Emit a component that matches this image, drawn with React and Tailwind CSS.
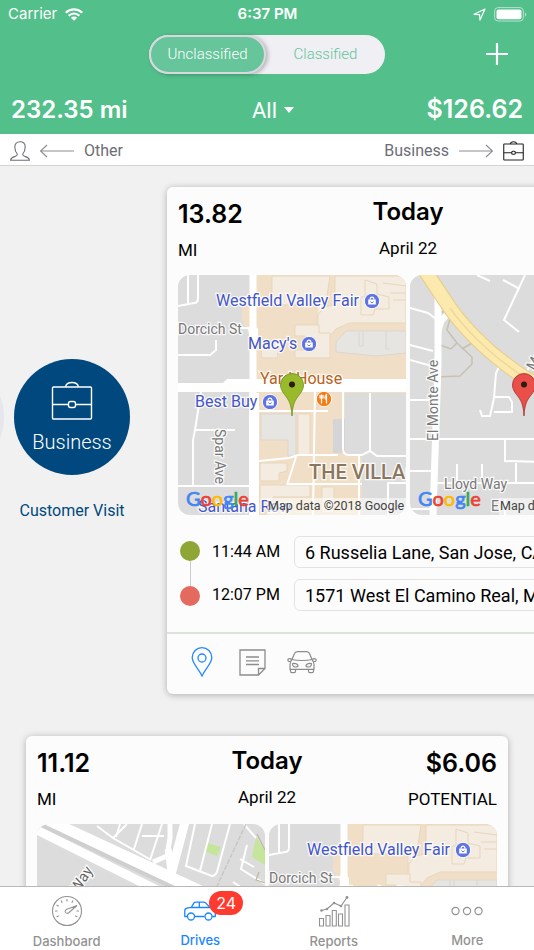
import React from "react";

function Briefcase({ className, strokeWidth = 1.2 }) {
  return (
    <svg viewBox="0 0 42 40" className={className} fill="none" stroke="currentColor" strokeWidth={strokeWidth} strokeLinejoin="round" aria-hidden="true">
      <rect x="1.5" y="6" width="39" height="32" rx="1" />
      <path d="M14.5 6c.5-3 3-4.5 6.5-4.5s6 1.5 6.5 4.5M1.5 23.5h16M24.5 23.5h16" />
      <rect x="17.5" y="20.5" width="7" height="6" rx="2" />
    </svg>
  );
}

function Arrow({ flip }) {
  return (
    <svg viewBox="0 0 34 14" className={flip ? "h-3.5 w-[34px] rotate-180" : "h-3.5 w-[34px]"} fill="none" stroke="#8e8e93" strokeWidth="1.2" aria-hidden="true">
      <path d="M0 7h33M27 1l6.5 6-6.5 6" />
    </svg>
  );
}

function StatusBar() {
  return (
    <div className="grid h-7 grid-cols-3 items-center pr-[7px] pl-2">
      <div className="flex items-center gap-2 text-[15px]">
        Carrier
        <svg viewBox="0 0 18 13" className="h-[13px] w-[18px]" fill="none" stroke="white" strokeWidth="2.2" aria-hidden="true">
          <path d="M.8 4.8a11.6 11.6 0 0 1 16.4 0" />
          <path d="M3.7 7.7a7.5 7.5 0 0 1 10.6 0" />
          <path d="M9 12.8 5.9 9.7a4.4 4.4 0 0 1 6.2 0z" fill="white" stroke="none" />
        </svg>
      </div>
      <div className="text-center text-[15px] font-semibold">6:37 PM</div>
      <div className="flex items-center justify-end gap-2">
        <svg viewBox="0 0 13 13" className="size-[13px]" fill="none" stroke="white" strokeWidth="1.2" strokeLinejoin="round" aria-hidden="true">
          <path d="M12 1 1 6.3l5.5.3.5 5.5z" />
        </svg>
        <svg viewBox="0 0 33 15" className="h-[15px] w-[33px]" aria-hidden="true">
          <rect x=".6" y=".6" width="28.8" height="13.4" rx="3.5" fill="none" stroke="#b5e3cc" strokeWidth="1" />
          <rect x="2.5" y="2.4" width="25" height="9.8" rx="2" fill="white" />
          <path d="M31 5.2c1.7.8 1.7 3.7 0 4.5z" fill="#b5e3cc" />
        </svg>
      </div>
    </div>
  );
}

function Header() {
  return (
    <header className="shrink-0 bg-[#53bf8b] text-white">
      <StatusBar />
      <div className="grid h-[52px] grid-cols-[1fr_auto_1fr] items-center">
        <div className="col-start-2 flex h-[39px] w-[236px] rounded-full bg-[#efeff4] font-[Roboto,sans-serif] text-[15px] font-light">
          <button aria-pressed="true" className="w-[117px] rounded-full border-2 border-[#d9d8de] bg-[#66c59b] shadow-[2px_1px_4px_rgba(0,0,0,0.25)]">Unclassified</button>
          <button aria-pressed="false" className="flex-1 text-[#66c59b]">Classified</button>
        </div>
        <button aria-label="Add drive" className="mr-[15px] flex size-11 items-center justify-center justify-self-end">
          <svg viewBox="0 0 22 22" className="size-[22px]" stroke="white" strokeWidth="2.2" aria-hidden="true">
            <path d="M11 0v22M0 11h22" />
          </svg>
        </button>
      </div>
      <div className="grid h-[54px] grid-cols-3 items-center px-[11px] pt-1.5">
        <div className="text-[24px] font-semibold">232.35 mi</div>
        <div className="relative ml-3 justify-self-center">
          <select aria-label="Period" className="appearance-none bg-transparent pr-4 font-[Roboto,sans-serif] text-[22px] outline-none">
            <option>All</option>
          </select>
          <svg viewBox="0 0 10 6" className="pointer-events-none absolute top-1/2 right-0 h-1.5 w-2.5 -translate-y-1/2" fill="white" aria-hidden="true">
            <path d="M0 0h10L5 6z" />
          </svg>
        </div>
        <div className="justify-self-end text-[25px] font-semibold">$126.62</div>
      </div>
    </header>
  );
}

function SwipeHints() {
  return (
    <div className="flex h-8 shrink-0 items-center justify-between border-b border-[#cfd8cf] bg-white px-2.5 pt-0.5 font-[Roboto,sans-serif] text-[16px] text-[#6d6d76]">
      <div className="flex items-center gap-2.5">
        <svg viewBox="0 0 20 20" className="size-5" fill="none" stroke="currentColor" strokeWidth="1.1" strokeLinejoin="round" aria-hidden="true">
          <path d="M7.3 13C5.5 11 4.8 8.5 4.8 6 4.8 2.8 6.9.8 10 .8s5.2 2 5.2 5.2c0 2.500-.7 5-2.500 7 .1 1.300.6 1.900 1.800 2.300 2.600.9 4.700 1.200 4.900 3.900H.6c.2-2.700 2.300-3 4.900-3.900 1.200-.4 1.700-1 1.800-2.300z" />
        </svg>
        <Arrow flip />
        <span>Other</span>
      </div>
      <div className="flex items-center gap-2.5">
        <span>Business</span>
        <Arrow />
        <Briefcase className="h-5 w-[21px] text-[#222]" strokeWidth={2.2} />
      </div>
    </div>
  );
}

function Pin({ fill, edge }) {
  return (
    <g>
      <path d="M114 141c-.8-13-3-15.5-7.5-21.5-2.5-3.2-4-6-4-9.5a11.5 11.5 0 0 1 23 0c0 3.500-1.500 6.300-4 9.500-4.500 6-6.700 8.500-7.500 21.500z" fill={fill} stroke={edge} strokeWidth=".8" />
      <circle cx="114" cy="109.5" r="3" fill="#2b1d10" />
    </g>
  );
}

function Shop({ x, y }) {
  return (
    <g transform={`translate(${x} ${y})`}>
      <circle r="7.7" fill="#5f74e0" stroke="white" strokeWidth="1" />
      <path d="M-3.8-1.5h7.6v5h-7.6z" fill="white" />
      <path d="M-2-1.5c0-3.300 4-3.300 4 0" fill="none" stroke="white" strokeWidth="1.2" />
      <path d="M-1.5.5c.3 1.600 2.700 1.600 3 0" fill="none" stroke="#5f74e0" />
    </g>
  );
}

function GoogleMark() {
  return (
    <text x="8" y="231" fontFamily="Lato" fontSize="20" strokeWidth=".7">
      <tspan fill="#4285f4" stroke="#4285f4">G</tspan>
      <tspan fill="#ea4335" stroke="#ea4335">o</tspan>
      <tspan fill="#fbbc05" stroke="#fbbc05">o</tspan>
      <tspan fill="#4285f4" stroke="#4285f4">g</tspan>
      <tspan fill="#34a853" stroke="#34a853">l</tspan>
      <tspan fill="#ea4335" stroke="#ea4335">e</tspan>
    </text>
  );
}

function Attribution() {
  return (
    <g>
      <rect x="89" y="223" width="139" height="17" fill="white" opacity=".55" />
      <text x="90" y="235" fontSize="12.5" fill="#444">Map data ©2018 Google</text>
    </g>
  );
}

function MapFrame({ label, children }) {
  return (
    <svg viewBox="0 0 228 240" preserveAspectRatio="xMidYMid slice" role="img" aria-label={label} className="h-60 min-w-0 flex-1 rounded-xl bg-[#dcdcdc] font-[Roboto,sans-serif]">
      {children}
    </svg>
  );
}

function ValleyFairMap() {
  return (
    <MapFrame label="Map of Westfield Valley Fair">
      <path d="M73 0h155v118h-61v60l17 4v58H72V62l-8-16V33l8-5z" fill="#f0dfc6" />
      <path d="M155 144h12v34h-12z" fill="#d5d5d8" />
      <g fill="#f4ece0" stroke="#e7d6bd" strokeWidth="1">
        <path d="M94 1h58l-3 20-5 12v26h-5V30H94z" />
        <path d="M140 40l6-8 11-2V1h71v47h-57l-13 6-10 12h-8z" />
        <path d="M117 50h24v8h11v25h-35v-8h10v-14h-10z" />
        <path d="M120 139h12v41h-12z" />
        <path d="M82 188h27v8l-8 2v8H82z" />
        <path d="M82 210h50v12H95v6H82z" />
        <path d="M82 67h20l-3 16H84zM144 212h12v26h-12z" />
        <path d="M187 5l12 4v10l12 3v12h-14l-2 6h-12V22h4zM205 8l23 3M212 18h16M215 25h13" fill="none" />
      </g>
      <g fill="#e7e5e2" stroke="#dbd6cf" strokeWidth="1">
        <path d="M168 56h60v22l-30 3-40-4v-10z" />
        <path d="M83 139h35v42h-8v-16H83z" />
        <path d="M181 57v14h4V57M208 56v18h4" fill="none" />
      </g>
      <g fill="none" stroke="white" strokeWidth="2">
        <path d="M10 0v28M20 0v23c0 3-1 5-4 5L0 31M38 65v10l-6 5H0M62 53h12M23 117l-6 38-2 10v45M17 155h40M0 211h74M79 136h71M137 115l-2 125M165 117v57c0 4 2 6 6 6h13l8-4 7 5h29M192 118v58M81 186l30-3 9-3 40 0M118 182l-9 28M109 209h75M181 180v60M210 240v-32h18" />
      </g>
      <path d="M75 0v240" stroke="white" strokeWidth="7" />
      <path d="M71 118h10v122H71z" fill="white" />
      <path d="M70 53l5-4 5 5v10h-8z" fill="white" />
      <path d="M0 108h45l4-4h179v13H0z" fill="white" />
      <g stroke="white" strokeWidth="2.5" strokeOpacity=".85" paintOrder="stroke" fontSize="16">
        <g fill="#4355c7">
          <text x="38" y="31">Westfield Valley Fair</text>
          <text x="70" y="74">Macy's</text>
          <text x="17" y="132">Best Buy</text>
          <text x="20" y="237">Santana Row</text>
        </g>
        <text x="82" y="109" fill="#b8621b">Yard House</text>
        <text x="0" y="59" fontSize="14" fill="#777">Dorcich St</text>
        <text transform="translate(37 154) rotate(90)" fontSize="14" fill="#777">Spar Ave</text>
        <text x="131" y="204" fontSize="20" fontWeight="500" fill="#8d765e">THE VILLAGE</text>
      </g>
      <Pin fill="#98ba2b" edge="#6f8f16" />
      <Shop x={194} y={26} />
      <Shop x={131} y={69} />
      <Shop x={92} y={127} />
      <g transform="translate(146 124)">
        <circle r="7.7" fill="#f57c17" stroke="white" />
        <path d="M-2.5 4.500v-9M-4-4v3h3v-3M2.500 4.500v-9c-2 1-2 4.500 0 5" fill="none" stroke="white" strokeWidth="1.2" />
      </g>
      <Attribution />
      <GoogleMark />
    </MapFrame>
  );
}

function ElMonteMap() {
  return (
    <MapFrame label="Map of El Monte Ave">
      <g fill="none" stroke="#c6c2b0" strokeWidth="1.5">
        <path d="M40 43l-3 12 10 13-6 6-11-4M47 68l15 14v7L50 101l-24 1M52 74l10-6M32 38l6-8" />
      </g>
      <g fill="none" stroke="white" strokeWidth="2">
        <path d="M0 33l18 5 8 6M0 70l23 6M0 85l22 6M0 125h22M0 164h228M0 196h22M25 208h203M95 165v21l35 1M106 188v20M47 189v17M72 189v17M115 0L94 45l15 12M93 5l15 8M67 0l13 6M90 90l-4 8-2 25-4 18h-8l-2-6M85 122h14l3 5v10H84M117 96l18-34M0 234h20M95 224v16" />
      </g>
      <path d="M28 20v70L23 240" fill="none" stroke="white" strokeWidth="7" />
      <path d="M40 38c-7 4-10 8-12 22" fill="none" stroke="white" strokeWidth="6" />
      <path d="M14-6l26 39c9 13 20 25 33 37 8 8 15 13 24 20 10 8 17 13 27 17l110 44" fill="none" stroke="#e8cd85" strokeWidth="15" />
      <path d="M14-6l26 39c9 13 20 25 33 37 8 8 15 13 24 20 10 8 17 13 27 17l110 44" fill="none" stroke="#fbe9ae" strokeWidth="13" />
      <path d="M40 33c9 13 20 25 33 37 8 8 15 13 24 20 10 8 17 13 27 17l110 44" fill="none" stroke="#f0d996" strokeWidth="1.5" />
      <g stroke="white" strokeWidth="2.5" strokeOpacity=".85" paintOrder="stroke" fill="#777" fontSize="14">
        <text transform="translate(28 166) rotate(-90)">El Monte Ave</text>
        <text transform="translate(124 96) rotate(-60)">Marich Way</text>
        <text x="34" y="214">Lloyd Way</text>
        <text x="81" y="236">E</text>
      </g>
      <Pin fill="#ea4f49" edge="#a5302c" />
      <Attribution />
      <GoogleMark />
    </MapFrame>
  );
}

function HighwayMap() {
  return (
    <MapFrame label="Map of the highway interchange">
      <path d="M170 19l14 4-4 9-13-5z" fill="#c5e59b" />
      <path d="M219 13l9 14v14l-13-8z" fill="#c5e59b" />
      <g fill="none" stroke="white" strokeWidth="2">
        <path d="M83 0l-4 13M60 2l16 12 14-14M76 14l38 22M105 0l-8 25M105 12h22M125 0l-12 36M158 0l-9 42 26 10c3 0 4-2 5-4L193 0M175 0l-12 47M210 21l-6 24 24 15M203 35l14 8M207 0l12 14M196 58l12 8" />
      </g>
      <path d="M133-2v16l-3 18-14 6" fill="none" stroke="white" strokeWidth="5" />
      <path d="M148-2l-16 60" fill="none" stroke="white" strokeWidth="9" />
      <path d="M131 25l3 22" fill="none" stroke="white" strokeWidth="7" />
      <path d="M-6 3L150 81" fill="none" stroke="white" strokeWidth="9" />
      <path d="M6-5L200 85" fill="none" stroke="white" strokeWidth="13" />
      <path d="M0-1L165 77" fill="none" stroke="#cfcfcf" strokeWidth="4" />
      <path d="M209 0l-15 32-14 30" fill="none" stroke="#c8c8c8" strokeWidth="1.5" strokeDasharray="5 1.5" />
      <path d="M220 10l8 16M222 48l-3 8 9 3" fill="none" stroke="#bdb79c" strokeWidth="1.2" />
      <text transform="translate(41 70) rotate(-57)" fontSize="15" fill="#666" stroke="white" strokeWidth="2.5" paintOrder="stroke">Way</text>
      <Attribution />
      <GoogleMark />
    </MapFrame>
  );
}

function CardHead({ miles, amount }) {
  return (
    <div className="grid grid-cols-[1fr_auto_1fr] font-[Roboto,sans-serif] text-[17px] leading-6">
      <div className="flex flex-col gap-2.5 pt-0.5">
        <strong className="font-[Inter,sans-serif] text-[25px] leading-7 font-semibold">{miles}</strong>
        <span>MI</span>
      </div>
      <div className="flex flex-col gap-2.5 text-center">
        <strong className="font-[Inter,sans-serif] text-[24px] leading-7 font-semibold">Today</strong>
        <span>April 22</span>
      </div>
      <div className="flex flex-col gap-2.5 pt-0.5 text-right">
        <strong className="font-[Inter,sans-serif] text-[25px] leading-7 font-semibold">{amount}</strong>
        <span>POTENTIAL</span>
      </div>
    </div>
  );
}

function Stop({ id, time, address }) {
  return (
    <div className="flex h-8 items-center font-[Roboto,sans-serif]">
      <label htmlFor={id} className="w-[82px] shrink-0 text-[16px]">{time}</label>
      <input id={id} type="text" readOnly defaultValue={address} className="h-8 min-w-0 flex-1 rounded-md border border-[#e3e3e3] bg-[#fcfcfc] px-2.5 text-[18px] outline-none" />
    </div>
  );
}

function DriveCard({ miles, amount, maps, stops }) {
  return (
    <article className="w-[calc(100%-52px)] shrink-0 rounded-md bg-[#fcfcfc] text-black shadow-[0_1px_7px_rgba(0,0,0,0.28)]">
      <div className="px-[11px] pt-[11px]">
        <CardHead miles={miles} amount={amount} />
        <div className="mt-[13px] flex gap-1">{maps}</div>
      </div>
      <div className="flex gap-3 px-2.5 py-[21px]">
        <div className="ml-[3px] flex w-5 shrink-0 flex-col items-center py-[5px]">
          <span className="size-5 rounded-full bg-[#8ea635]" />
          <span className="w-px flex-1 bg-[#cccccc]" />
          <span className="size-5 rounded-full bg-[#e46a60]" />
        </div>
        <div className="flex min-w-0 flex-1 flex-col gap-[11px]">{stops}</div>
      </div>
      <div className="flex h-[62px] items-center gap-[21px] border-t-2 border-[#dbe3db] pb-1 pl-5 text-[#8c8c8c]">
        <button aria-label="Route" className="flex w-[30px] justify-center text-[#2488ff]">
          <svg viewBox="0 0 22 30" className="h-[30px] w-[22px]" fill="none" stroke="currentColor" strokeWidth="1.3" aria-hidden="true">
            <path d="M11 29C8 22 1.200 16.500 1.200 10.500a9.800 9.800 0 0 1 19.600 0C20.800 16.500 14 22 11 29z" />
            <circle cx="11" cy="11" r="4" />
          </svg>
        </button>
        <button aria-label="Notes" className="flex w-[28px] justify-center">
          <svg viewBox="0 0 27 27" className="size-[27px]" fill="none" stroke="currentColor" strokeWidth="1.3" aria-hidden="true">
            <path d="M1 1h25v18.500L19.500 26H1zM19.500 26v-6.500H26M7 8h13M7 11.800h13M7 15.500h13" />
          </svg>
        </button>
        <button aria-label="Vehicle" className="flex w-[30px] justify-center">
          <svg viewBox="0 0 30 24" className="h-6 w-[30px]" fill="none" stroke="currentColor" strokeWidth="1.2" strokeLinejoin="round" aria-hidden="true">
            <path d="M5 9.500 7.500 3.500C8 2.200 9 1.800 10.500 1.700a60 60 0 0 1 9 0c1.500.1 2.500.5 3 1.800L25 9.500c-5 1.300-15 1.300-20 0z" />
            <path d="M5 9.500C3.500 11 3 12.500 3 14.500v4.800h24v-4.800c0-2-.5-3.500-2-5M4.500 11.500H1.800C.5 11 .5 9 1.800 8.800c1.200-.2 2.400 0 3 .9M25.500 11.500h2.700c1.300-.5 1.300-2.500 0-2.700-1.200-.2-2.400 0-3 .9" />
            <path d="M3.500 19.500v1.800c0 1 .4 1.400 1.300 1.400h2.400c.9 0 1.300-.4 1.300-1.400v-1.800M21.500 19.500v1.800c0 1 .4 1.400 1.300 1.400h2.400c.9 0 1.300-.4 1.300-1.400v-1.800" />
            <path d="M5.500 13.500c2.500-.3 5 .5 5.500 2 .2 1-1 1.500-2.500 1.500s-3-.7-3-3.500zM24.500 13.500c-2.500-.3-5 .5-5.500 2-.2 1 1 1.500 2.500 1.500s3-.7 3-3.500z" />
          </svg>
        </button>
      </div>
    </article>
  );
}

function SwipeActions() {
  return (
    <div className="flex w-[167px] shrink-0 items-center justify-end overflow-hidden pr-[37px]">
      <div className="flex items-start gap-2.5">
        <div className="size-[116px] shrink-0 rounded-full bg-[#e6e7ec]" />
        <button className="flex w-[116px] shrink-0 flex-col items-center gap-6 font-[Roboto,sans-serif] text-[16px] leading-6 text-[#00487e]">
          <span className="flex size-[116px] flex-col items-center rounded-full bg-[#00487e] pt-[22px] text-[20px] leading-7 font-light text-white">
            <Briefcase className="h-10 w-[42px]" strokeWidth={1.4} />
            <span className="mt-[7px]">Business</span>
          </span>
          Customer Visit
        </button>
      </div>
    </div>
  );
}

function Tab({ label, active, children }) {
  return (
    <a href="#" aria-current={active ? "page" : undefined} className={active ? "flex flex-1 flex-col items-center gap-1 pt-2 text-[13px] leading-5 font-medium text-[#1b86ff]" : "flex flex-1 flex-col items-center gap-1 pt-2 text-[13px] leading-5 font-medium text-[#929292]"}>
      <span className="relative flex h-8 items-center">{children}</span>
      {label}
    </a>
  );
}

function TabBar() {
  return (
    <nav className="flex h-16 shrink-0 border-t border-[#b8b8b8] bg-white">
      <Tab label="Dashboard">
        <svg viewBox="0 0 32 32" className="size-8" fill="none" stroke="currentColor" strokeWidth="1.1" aria-hidden="true">
          <circle cx="16" cy="16" r="14.5" />
          <path d="M16 4v2.500M10 5.600l1.200 2.100M5.600 10l2.100 1.200M4 16h2.500M5.600 22l2.100-1.200M22 5.600l-1.200 2.100M28 16h-2.500M26.400 22l-2.100-1.200" />
          <path d="M26 10.500 18 17.500c-1.200 1-2.700 1-3.500 0-.8-1.200-.2-2.600 1.500-3.300z" />
        </svg>
      </Tab>
      <Tab label="Drives" active>
        <svg viewBox="0 0 34 20" className="h-5 w-[34px]" fill="none" stroke="currentColor" strokeWidth="1.3" strokeLinejoin="round" aria-hidden="true">
          <path d="M4 15.500H1.800v-6c0-1.500 1-2.300 3-2.600l3.500-.5 2.500-4.200c.5-.8 1-1 2-1h7.500c1.200 0 2 .3 2.800 1.200l4 4.100 2.400.7c2 .6 2.800 1.500 2.800 3.300v5H29M12 15.500h9.500M8.300 6.500h19M16.300 1.200v5.300" />
          <circle cx="8" cy="15.5" r="3.5" />
          <circle cx="25.5" cy="15.5" r="3.5" />
        </svg>
        <span className="absolute -top-1 left-[26px] flex h-6 w-[34px] items-center justify-center rounded-full bg-[#ff3b30] text-[16px] font-normal text-white">24</span>
      </Tab>
      <Tab label="Reports">
        <svg viewBox="0 0 32 32" className="size-8" fill="none" stroke="currentColor" strokeWidth="1.1" aria-hidden="true">
          <path d="M1.500 23.500h4v7.500h-4zM8 20.500h4V31H8zM14.300 15.500h4V31h-4zM20.500 19h4v12h-4zM27 10h4v21h-4zM3.500 15.500 9 14l7-6 7 3 6-8.500" />
          <g fill="currentColor" stroke="none">
            <circle cx="3.5" cy="15.5" r="1.3" />
            <circle cx="9" cy="14" r="1.2" />
            <circle cx="16" cy="8" r="1.3" />
            <circle cx="23" cy="11" r="1.3" />
            <circle cx="29" cy="2.5" r="1.4" />
          </g>
        </svg>
      </Tab>
      <Tab label="More">
        <svg viewBox="0 0 32 10" className="h-2.5 w-8" fill="none" stroke="currentColor" strokeWidth="1.2" aria-hidden="true">
          <circle cx="4.5" cy="5" r="3.6" />
          <circle cx="16" cy="5" r="3.6" />
          <circle cx="27.5" cy="5" r="3.6" />
        </svg>
      </Tab>
    </nav>
  );
}

export default function App() {
  return (
    <div className="flex h-screen flex-col overflow-hidden bg-[#f1f1f1] font-[Inter,'Liberation_Sans',sans-serif]">
      <Header />
      <SwipeHints />
      <main className="flex min-h-0 flex-1 flex-col gap-[42px] overflow-x-hidden overflow-y-auto pt-[21px] [scrollbar-width:none]">
        <div className="flex">
          <SwipeActions />
          <DriveCard
            miles="13.82"
            amount="$7.53"
            maps={<><ValleyFairMap /><ElMonteMap /></>}
            stops={
              <>
                <Stop id="start-1" time="11:44 AM" address="6 Russelia Lane, San Jose, CA" />
                <Stop id="end-1" time="12:07 PM" address="1571 West El Camino Real, Mountain View" />
              </>
            }
          />
        </div>
        <div className="flex justify-center">
          <DriveCard
            miles="11.12"
            amount="$6.06"
            maps={<><HighwayMap /><ValleyFairMap /></>}
            stops={
              <>
                <Stop id="start-2" time="10:05 AM" address="Stevens Creek Blvd, San Jose, CA" />
                <Stop id="end-2" time="10:31 AM" address="6 Russelia Lane, San Jose, CA" />
              </>
            }
          />
        </div>
      </main>
      <TabBar />
    </div>
  );
}
